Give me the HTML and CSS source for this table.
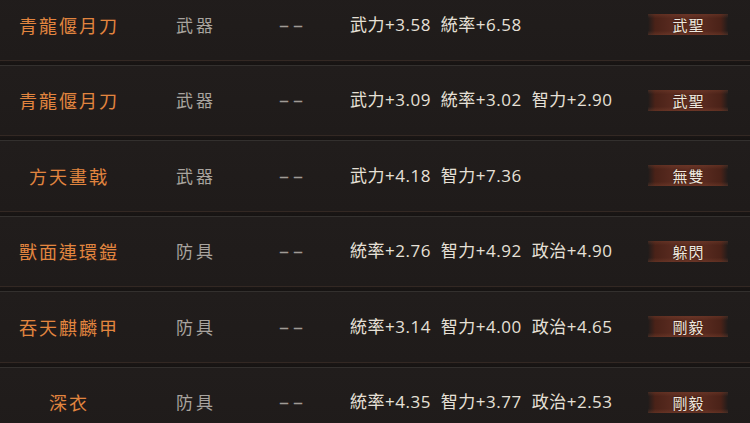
FILE: index.html
```html
<!DOCTYPE html>
<html lang="zh-Hant">
<head>
<meta charset="utf-8">
<link rel="stylesheet" href="styles.css">
</head>
<body>
<div class="list">
  <div class="item">
    <div class="row">
      <div class="name">青龍偃月刀</div>
      <div class="type">武器</div>
      <div class="dash">––</div>
      <div class="stats"><span class="stat">武力+3.58</span><span class="stat">統率+6.58</span></div>
      <div class="badge-cell"><span class="badge">武聖</span></div>
    </div>
    <div class="sep"></div>
  </div>
  <div class="item">
    <div class="row">
      <div class="name">青龍偃月刀</div>
      <div class="type">武器</div>
      <div class="dash">––</div>
      <div class="stats"><span class="stat">武力+3.09</span><span class="stat">統率+3.02</span><span class="stat">智力+2.90</span></div>
      <div class="badge-cell"><span class="badge">武聖</span></div>
    </div>
    <div class="sep"></div>
  </div>
  <div class="item">
    <div class="row">
      <div class="name">方天畫戟</div>
      <div class="type">武器</div>
      <div class="dash">––</div>
      <div class="stats"><span class="stat">武力+4.18</span><span class="stat">智力+7.36</span></div>
      <div class="badge-cell"><span class="badge">無雙</span></div>
    </div>
    <div class="sep"></div>
  </div>
  <div class="item">
    <div class="row">
      <div class="name">獸面連環鎧</div>
      <div class="type">防具</div>
      <div class="dash">––</div>
      <div class="stats"><span class="stat">統率+2.76</span><span class="stat">智力+4.92</span><span class="stat">政治+4.90</span></div>
      <div class="badge-cell"><span class="badge">躲閃</span></div>
    </div>
    <div class="sep"></div>
  </div>
  <div class="item">
    <div class="row">
      <div class="name">吞天麒麟甲</div>
      <div class="type">防具</div>
      <div class="dash">––</div>
      <div class="stats"><span class="stat">統率+3.14</span><span class="stat">智力+4.00</span><span class="stat">政治+4.65</span></div>
      <div class="badge-cell"><span class="badge">剛毅</span></div>
    </div>
    <div class="sep"></div>
  </div>
  <div class="item">
    <div class="row">
      <div class="name">深衣</div>
      <div class="type">防具</div>
      <div class="dash">––</div>
      <div class="stats"><span class="stat">統率+4.35</span><span class="stat">智力+3.77</span><span class="stat">政治+2.53</span></div>
      <div class="badge-cell"><span class="badge">剛毅</span></div>
    </div>
    <div class="sep"></div>
  </div>
</div>
</body>
</html>
```

FILE: styles.css
```css
html, body {
  margin: 0;
  padding: 0;
  background: #1f1b1a;
  overflow: hidden;
}
body {
  width: 750px;
  height: 423px;
  font-family: "Noto Sans CJK TC", "Noto Sans CJK SC", "Noto Sans", sans-serif;
}
.list {
  margin-top: -10px;
  display: flex;
  flex-direction: column;
}
.item {
  display: flex;
  flex-direction: column;
}
.row {
  height: 69.5px;
  display: grid;
  grid-template-columns: 136px 120px 70px 1fr 80px;
  padding-right: 22px;
  align-items: center;
  background: linear-gradient(180deg, #211d1c 0%, #1f1b1a 100%);
}
.sep {
  height: 6px;
  background: linear-gradient(180deg,
    #332823 0, #332823 1px,
    #1a1615 1px, #161312 5px,
    #33302e 5px, #33302e 6px);
}
.name {
  text-align: center;
  color: #e2853f;
  font-size: 18px;
  letter-spacing: 2px;
  padding-left: 2px;
  line-height: 24px;
}
.type {
  padding-left: 40px;
  color: #a9a49f;
  font-size: 17px;
  letter-spacing: 3px;
  line-height: 24px;
}
.dash {
  text-align: center;
  color: #a09b96;
  font-family: "Open Sans", sans-serif;
  font-size: 20px;
  letter-spacing: 4px;
  padding-left: 4px;
  line-height: 24px;
}
.stats {
  padding-left: 24px;
  color: #e6e0d7;
  font-family: "Open Sans", "Noto Sans CJK TC", sans-serif;
  font-size: 17px;
  line-height: 24px;
  display: flex;
  gap: 10px;
  white-space: nowrap;
}
.stat {
  letter-spacing: 0.5px;
}
.badge-cell {
  display: flex;
  justify-content: center;
}
.badge {
  width: 80px;
  height: 21px;
  display: flex;
  align-items: center;
  justify-content: center;
  color: #efe8df;
  font-size: 15px;
  letter-spacing: 1px;
  padding-left: 1px;
  box-sizing: border-box;
  text-shadow: 0 0 2px #2a120c;
  background:
    linear-gradient(180deg, rgba(130, 70, 50, 0.35) 0, rgba(130, 70, 50, 0) 20%, rgba(130, 70, 50, 0) 80%, rgba(130, 70, 50, 0.4) 100%),
    linear-gradient(90deg,
      rgba(74, 34, 24, 0) 0%,
      #4a2218 9%,
      #582a1f 30%,
      #5e2d21 50%,
      #582a1f 70%,
      #4a2218 91%,
      rgba(74, 34, 24, 0) 100%);
}
```
